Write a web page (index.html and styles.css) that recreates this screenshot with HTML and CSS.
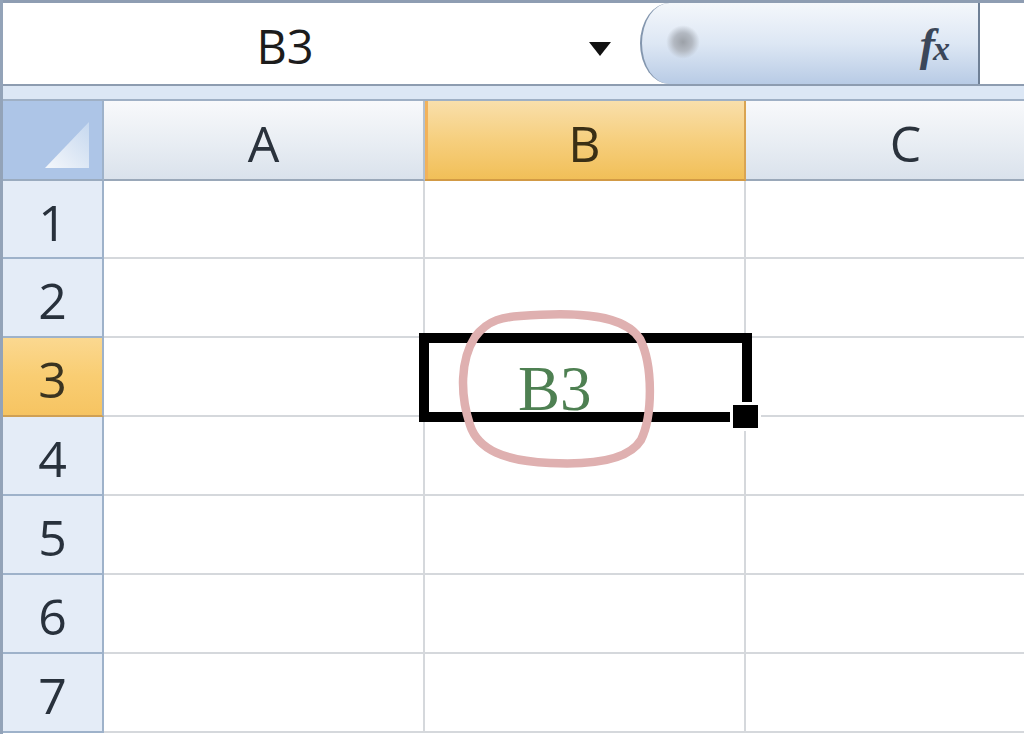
FILE: index.html
```html
<!DOCTYPE html>
<html lang="en">
<head>
    <meta charset="UTF-8">
    <meta name="viewport" content="width=device-width, initial-scale=1.0">
    <title>Cell reference B3</title>
    <link rel="stylesheet" href="styles.css">
</head>
<body>
    <div class="window">
        <!-- Name box + formula bar -->
        <div class="formula-bar">
            <div class="name-box">
                <span class="name-value">B3</span>
                <svg class="name-arrow" viewBox="0 0 22 14"><polygon points="0,0 22,0 11,14" fill="#111"/></svg>
            </div>
            <div class="fx-button">
                <span class="fx-knob"></span>
                <span class="fx-label">f<span class="fx-x">x</span></span>
            </div>
            <div class="formula-input"></div>
        </div>
        <div class="bar-strip"></div>

        <!-- Worksheet -->
        <div class="sheet">
            <div class="corner">
                <svg class="corner-mark" viewBox="0 0 101 80">
                    <defs>
                        <linearGradient id="cornerFill" x1="0" y1="1" x2="1" y2="0">
                            <stop offset="0" stop-color="#f4f7fb"/>
                            <stop offset="1" stop-color="#c6d8ef"/>
                        </linearGradient>
                    </defs>
                    <polygon points="42,67 86,21 86,67" fill="url(#cornerFill)"/>
                </svg>
            </div>
            <div class="col-head">A</div>
            <div class="col-head active">B</div>
            <div class="col-head">C</div>

            <div class="row-head">1</div>
            <div class="cell"></div><div class="cell"></div><div class="cell"></div>

            <div class="row-head">2</div>
            <div class="cell"></div><div class="cell"></div><div class="cell"></div>

            <div class="row-head active">3</div>
            <div class="cell"></div>
            <div class="cell cell-b3"><span class="cell-value">B3</span></div>
            <div class="cell"></div>

            <div class="row-head">4</div>
            <div class="cell"></div><div class="cell"></div><div class="cell"></div>

            <div class="row-head">5</div>
            <div class="cell"></div><div class="cell"></div><div class="cell"></div>

            <div class="row-head">6</div>
            <div class="cell"></div><div class="cell"></div><div class="cell"></div>

            <div class="row-head">7</div>
            <div class="cell"></div><div class="cell"></div><div class="cell"></div>

            <!-- active cell outline and hand-drawn note -->
            <div class="selection"></div>
            <span class="fill-handle"></span>
            <svg class="note-ring" viewBox="450 300 220 180">
                <path d="M 520 316 C 580 311, 625 315, 640 339 C 653 365, 653 415, 641 440 C 628 461, 590 465, 550 463 C 505 461, 478 450, 470 425 C 460 395, 460 360, 475 337 C 488 319, 505 317, 520 316 Z"/>
            </svg>
        </div>
    </div>
</body>
</html>
```

FILE: styles.css
```css
* {
    margin: 0;
    padding: 0;
    box-sizing: border-box;
}

html, body {
    width: 1024px;
    height: 734px;
    overflow: hidden;
}

body {
    font-family: "Open Sans", "DejaVu Sans", sans-serif;
    background: #fff;
    color: #28313c;
}

.window {
    height: 734px;
    border-left: 3px solid #93a3b8;
    display: flex;
    flex-direction: column;
}

/* Formula bar */
.formula-bar {
    display: flex;
    height: 86px;
    flex-shrink: 0;
    border-top: 3px solid #8e9db2;
    border-bottom: 2px solid #8d9cb0;
    background: #fff;
}

.name-box {
    width: 637px;
    display: flex;
    align-items: center;
}

.name-value {
    flex: 1;
    text-align: center;
    font-size: 47px;
    color: #1c1c1c;
    padding-top: 4px;
}

.name-arrow {
    width: 22px;
    height: 14px;
    margin: 10px 29px 0 22px;
}

.fx-button {
    width: 340px;
    display: flex;
    align-items: center;
    justify-content: space-between;
    padding: 0 28px 0 24px;
    border-left: 2px solid #8396ae;
    border-right: 2px solid #6f8096;
    border-radius: 30px 0 0 30px / 41px 0 0 41px;
    background: linear-gradient(#f4f7fb, #dde7f4 50%, #b8cbe5);
}

.fx-knob {
    width: 34px;
    height: 34px;
    border-radius: 50%;
    margin-top: -4px;
    background: radial-gradient(circle, #9ca1a8 0%, #b3b9c2 38%, rgba(200, 210, 225, 0) 70%);
}

.fx-label {
    font-family: "Liberation Serif", "DejaVu Serif", serif;
    font-style: italic;
    font-weight: bold;
    font-size: 46px;
    color: #3b4759;
    margin-top: 2px;
}

.fx-x {
    font-size: 34px;
    margin-left: -2px;
}

.formula-input {
    flex: 1;
    background: #fff;
}

.bar-strip {
    height: 15px;
    flex-shrink: 0;
    background: #dce7f5;
    border-bottom: 2px solid #9fb0c5;
}

/* Worksheet grid */
.sheet {
    position: relative;
    flex: 1;
    display: grid;
    grid-template-columns: 101px repeat(3, 321px);
    grid-template-rows: 80px 78px repeat(6, 79px);
}

.corner {
    background: #adc5e7;
    border-right: 2px solid #9eb2ca;
    border-bottom: 2px solid #9aabbf;
}

.corner-mark {
    display: block;
    width: 101px;
    height: 80px;
}

.col-head {
    display: flex;
    align-items: center;
    justify-content: center;
    padding-top: 6px;
    font-size: 50px;
    color: #2a323c;
    background: linear-gradient(#f8f9fb, #e8edf3 55%, #dae2ec);
    border-right: 2px solid #b4c0ce;
    border-bottom: 2px solid #9aa8b9;
}

.col-head.active {
    color: #3a2f15;
    background: linear-gradient(#f9dfab, #f6cf7e 50%, #f1bf58);
    border-right-color: #d9a452;
    border-bottom-color: #d29a45;
    box-shadow: inset 3px 0 0 #f2b25a;
}

.row-head {
    display: flex;
    align-items: center;
    justify-content: center;
    padding-top: 5px;
    font-size: 50px;
    color: #28313c;
    background: #e4ecf7;
    border-right: 2px solid #9eb2ca;
    border-bottom: 2px solid #9eb2ca;
}

.row-head.active {
    color: #3a3320;
    background: linear-gradient(#fbd890, #f9cd72 50%, #f6c462);
    border-bottom-color: #cfa055;
}

.cell {
    background: #fff;
    border-right: 2px solid #d5d8dc;
    border-bottom: 2px solid #d5d8dc;
}

.cell-b3 {
    padding: 20px 0 0 93px;
}

.cell-value {
    font-family: "Liberation Serif", "DejaVu Serif", serif;
    font-size: 63px;
    line-height: 63px;
    color: #4e8052;
}

.selection {
    position: absolute;
    left: 416px;
    top: 232px;
    width: 333px;
    height: 89px;
    border: 10px solid #000;
}

.fill-handle {
    position: absolute;
    left: 727px;
    top: 301px;
    width: 31px;
    height: 29px;
    background: #000;
    border: 3px solid #fff;
}

.note-ring {
    position: absolute;
    left: 447px;
    top: 199px;
    width: 220px;
    height: 180px;
    overflow: visible;
}

.note-ring path {
    fill: none;
    stroke: #dfb0b0;
    stroke-width: 8.5;
    stroke-linejoin: round;
}
```
